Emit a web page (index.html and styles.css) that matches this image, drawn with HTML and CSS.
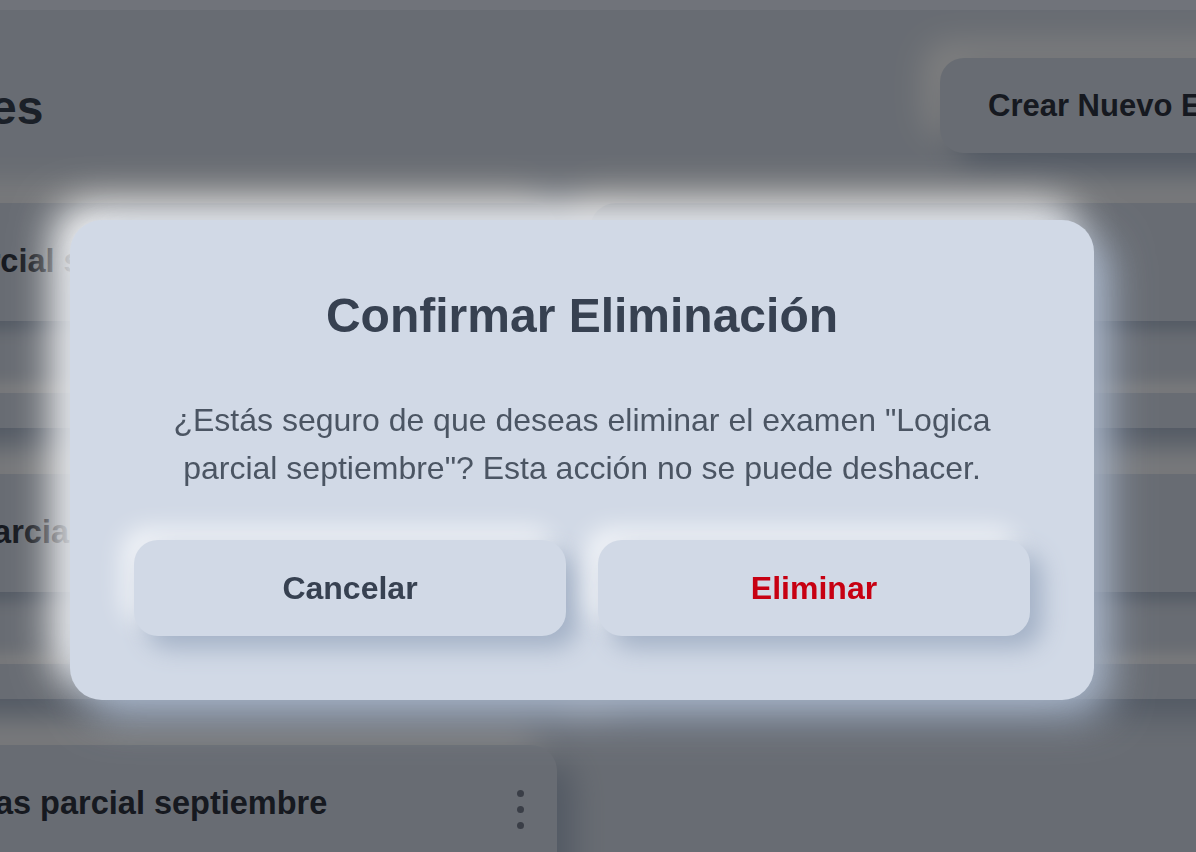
FILE: index.html
```html
<!DOCTYPE html>
<html lang="es">
<head>
<meta charset="utf-8">
<title>Exámenes</title>
<link rel="stylesheet" href="styles.css">
</head>
<body>
<div class="topbar"></div>
<div class="page">
  <header class="header">
    <h1 class="page-title">Exámenes</h1>
    <button class="btn-raised create-btn">Crear Nuevo Examen</button>
  </header>
  <section class="grid">
    <article class="card">
      <div class="card-head"><h2 class="card-title">Logica parcial septiembre</h2><span class="kebab"><i></i><i></i><i></i></span></div>
      <div class="card-bar"></div>
    </article>
    <article class="card">
      <div class="card-head"><h2 class="card-title">Física parcial septiembre</h2><span class="kebab"><i></i><i></i><i></i></span></div>
      <div class="card-bar"></div>
    </article>
    <article class="card">
      <div class="card-head"><h2 class="card-title">Química parcial septiembre</h2><span class="kebab"><i></i><i></i><i></i></span></div>
      <div class="card-bar"></div>
    </article>
    <article class="card">
      <div class="card-head"><h2 class="card-title">Historia parcial septiembre</h2><span class="kebab"><i></i><i></i><i></i></span></div>
      <div class="card-bar"></div>
    </article>
    <article class="card">
      <div class="card-head"><h2 class="card-title">Matemáticas parcial septiembre</h2><span class="kebab"><i></i><i></i><i></i></span></div>
      <div class="card-bar"></div>
    </article>
  </section>
</div>

<div class="overlay">
  <div class="modal" role="dialog">
    <h2 class="modal-title">Confirmar Eliminación</h2>
    <p class="modal-text">¿Estás seguro de que deseas eliminar el examen "Logica parcial septiembre"? Esta acción no se puede deshacer.</p>
    <div class="modal-actions">
      <button class="btn-raised modal-btn">Cancelar</button>
      <button class="btn-raised modal-btn danger">Eliminar</button>
    </div>
  </div>
</div>
</body>
</html>
```
FILE: styles.css
```css
* { box-sizing: border-box; }

html, body {
  margin: 0;
  padding: 0;
  height: 100%;
  overflow: hidden;
}

body {
  background: #d1d9e6;
  font-family: "Liberation Sans", Arial, sans-serif;
  color: #374151;
}

.topbar {
  height: 10px;
  background: #e0e6f5;
}

.page {
  width: 1571px;
  margin-left: -212px;
}

.header {
  display: flex;
  align-items: center;
  justify-content: space-between;
  padding: 48px 0 50px;
}

.page-title {
  margin: 0;
  padding: 5px 0 0 18px;
  font-size: 48px;
  line-height: 64px;
  font-weight: 700;
  color: #374151;
}

.btn-raised {
  border: none;
  background: #d1d9e6;
  font-family: inherit;
  font-weight: 700;
  cursor: pointer;
}

.create-btn {
  width: 419px;
  height: 95px;
  border-radius: 24px;
  font-size: 31px;
  color: #2d3340;
  text-align: left;
  padding: 0 48px;
  white-space: nowrap;
  box-shadow: 16px 16px 32px #a3b1c6, -16px -16px 32px #ffffff;
}

.grid {
  display: grid;
  grid-template-columns: 769px 769px;
  column-gap: 33px;
  row-gap: 46px;
}

.card {
  height: 225px;
  border-radius: 26px;
  background: #d1d9e6;
  padding: 38px 32px 0 48px;
  box-shadow: 16px 16px 32px #a3b1c6, -16px -16px 32px #ffffff;
}

.card-head {
  display: flex;
  align-items: flex-start;
  justify-content: space-between;
}

.card-title {
  margin: 0;
  font-size: 32.5px;
  line-height: 40px;
  font-weight: 700;
  color: #2d3340;
}

.kebab {
  display: flex;
  flex-direction: column;
  gap: 9px;
  width: 8px;
  margin-top: 7px;
}

.kebab i {
  display: block;
  width: 7px;
  height: 7px;
  border-radius: 50%;
  background: #747c8e;
}

.card-bar {
  margin: 34px 16px 0 0;
  height: 72px;
  border-radius: 20px;
  box-shadow: inset 8px 8px 16px #a3b1c6, inset -8px -8px 16px #ffffff;
}

.overlay {
  position: fixed;
  inset: 0;
  background: rgba(0, 0, 0, 0.5);
  padding: 220px 0 0 70px;
}

.modal {
  width: 1024px;
  padding: 64px;
  border-radius: 32px;
  background: #d1d9e6;
  box-shadow: 16px 16px 40px #a3b1c6, -16px -16px 40px #ffffff;
  text-align: center;
}

.modal-title {
  margin: 0 0 48px;
  font-size: 48px;
  line-height: 64px;
  font-weight: 700;
  color: #374151;
}

.modal-text {
  margin: 0 0 48px;
  font-size: 32px;
  line-height: 48px;
  color: #4b5563;
}

.modal-actions {
  display: flex;
  gap: 32px;
}

.modal-btn {
  flex: 1;
  padding: 24px 0;
  font-size: 32px;
  line-height: 48px;
  border-radius: 24px;
  color: #374151;
  box-shadow: 12px 12px 24px #a3b1c6, -12px -12px 24px rgba(255, 255, 255, 0.7);
}

.modal-btn.danger {
  color: #c70012;
}
```
